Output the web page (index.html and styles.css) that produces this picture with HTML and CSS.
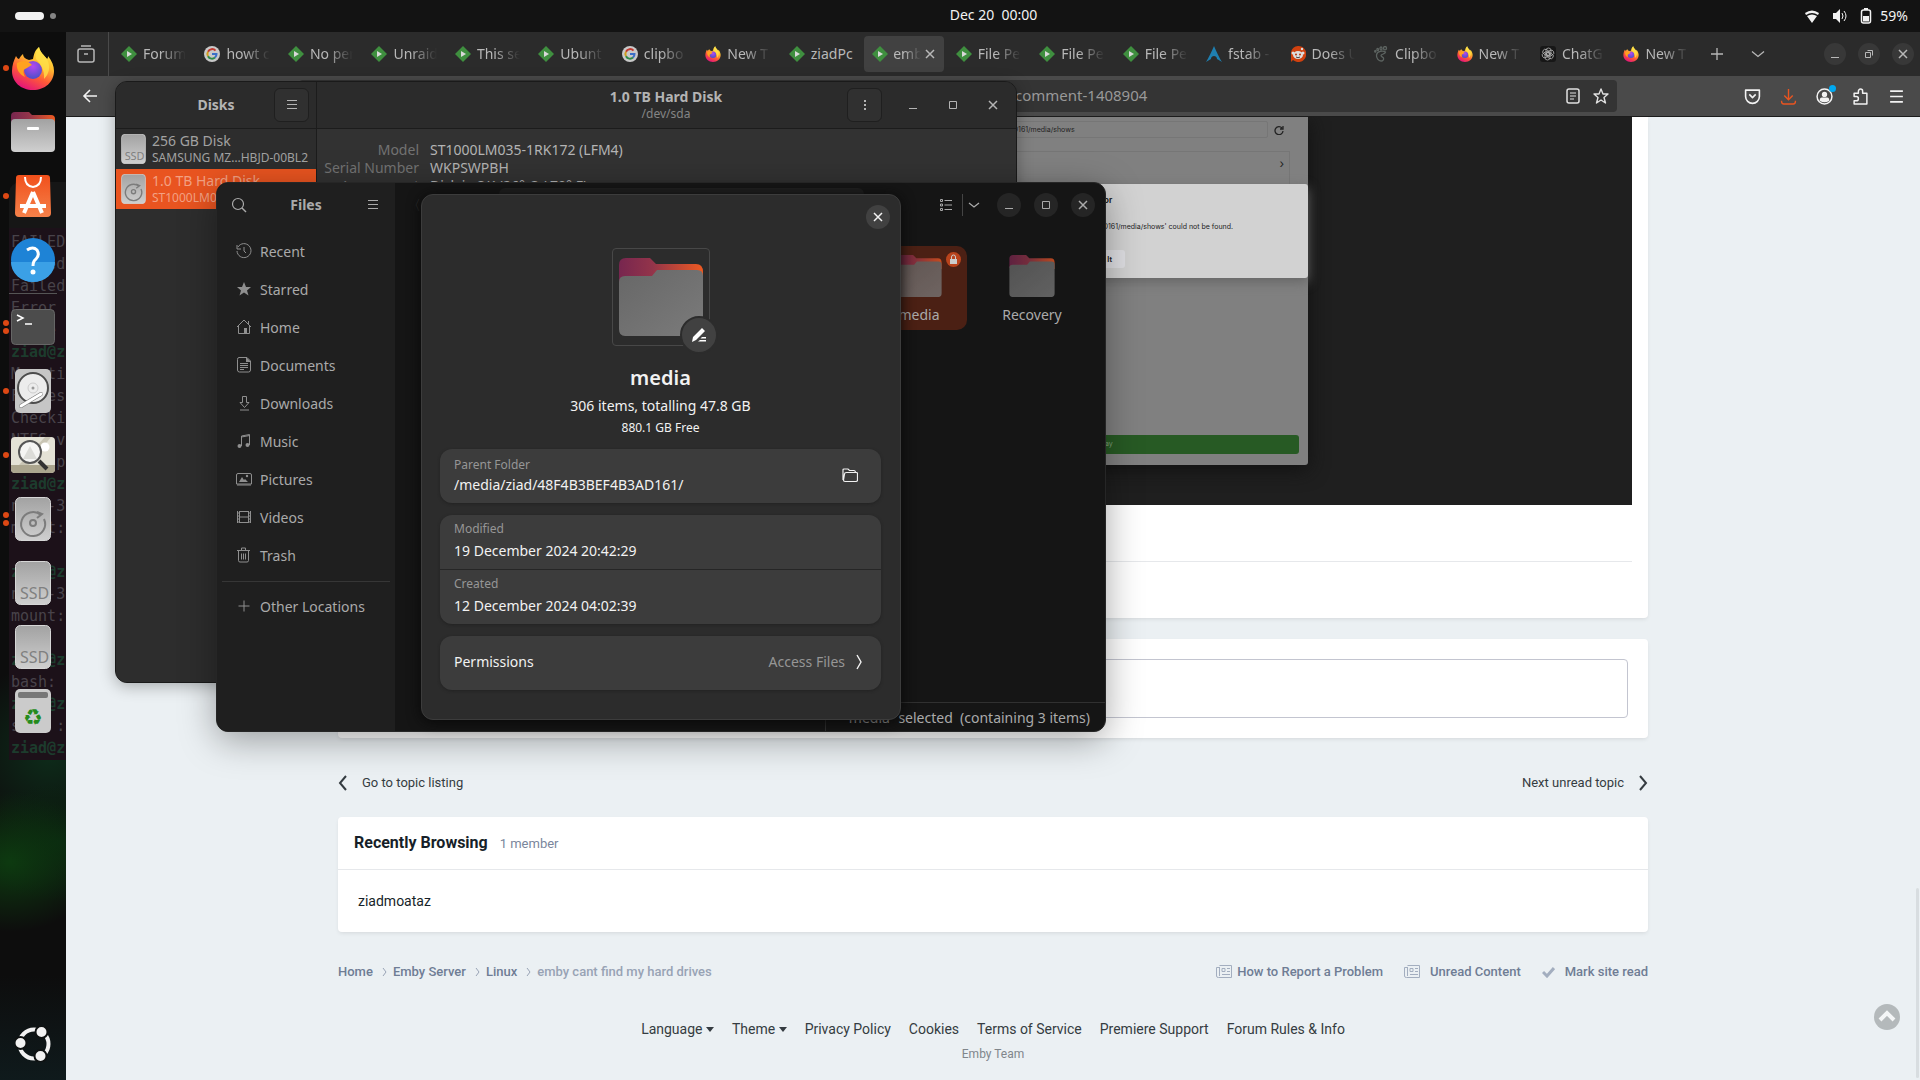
FILE: index.html
```html
<!DOCTYPE html>
<html lang="en">
<head>
  <meta charset="UTF-8" />
  <meta name="viewport" content="width=device-width, initial-scale=1.0" />
  <title>Desktop</title>
  <link rel="stylesheet" href="styles.css">
</head>
<body>
  <!-- shared icons -->
  <svg class="sprite" width="0" height="0" aria-hidden="true">
    <defs>
      <linearGradient id="g-flame" x1="0.8" y1="0" x2="0.3" y2="1">
        <stop offset="0" stop-color="#fff44f"/><stop offset="0.35" stop-color="#ffbd2f"/>
        <stop offset="0.65" stop-color="#ff5b36"/><stop offset="1" stop-color="#e3107e"/>
      </linearGradient>
      <radialGradient id="g-globe" cx="0.5" cy="0.3" r="0.7">
        <stop offset="0" stop-color="#b547f0"/><stop offset="1" stop-color="#4a50c8"/>
      </radialGradient>
      <linearGradient id="g-folder" x1="0" y1="0.3" x2="1" y2="0.3">
        <stop offset="0" stop-color="#77264f"/><stop offset="0.4" stop-color="#93344a"/><stop offset="1" stop-color="#ee5a22"/>
      </linearGradient>
      <linearGradient id="g-front" x1="0" y1="0" x2="1" y2="1">
        <stop offset="0" stop-color="#676767"/><stop offset="1" stop-color="#7b7b7b"/>
      </linearGradient>
      <linearGradient id="g-metal" x1="0" y1="0" x2="0" y2="1">
        <stop offset="0" stop-color="#a2a2a2"/><stop offset="1" stop-color="#cfcfcf"/>
      </linearGradient>
      <linearGradient id="g-bag" x1="0" y1="0" x2="0" y2="1">
        <stop offset="0" stop-color="#f1501b"/><stop offset="1" stop-color="#f5814a"/>
      </linearGradient>
    </defs>
    <symbol id="i-firefox" viewBox="0 0 44 44">
      <path fill="url(#g-flame)" d="M5 10c1 2 2 3 3 3 1-2 2-3 4-5 0 3 2 5 6 6l4-1c1-5 2-9 6-12 1 5 5 8 8 12 1-1 1-2 1-3 4 5 6 10 6 15 0 11-9 19-21 19S1 36 1 25c0-6 2-11 4-15z"/>
      <circle cx="22" cy="24" r="9" fill="url(#g-globe)"/>
      <path fill="#ffa21f" d="M6 17c5-3 11-3 15 2-3 1-4 3-7 4-2 1-2 4 0 8-6-3-9-8-8-14z"/>
      <path fill="#ffe14a" opacity=".8" d="M28 1c1 5 5 8 8 12 4 8 2 15-3 20 1-9-4-16-8-20-1-5 1-9 3-12z"/>
    </symbol>
    <symbol id="i-emby" viewBox="0 0 16 16">
      <path fill="#3f8f3f" d="M8 0l8 8-8 8-8-8z"/><path fill="#d9d9d9" d="M6 5l5 3-5 3z"/>
    </symbol>
    <symbol id="i-google" viewBox="0 0 16 16">
      <circle cx="8" cy="8" r="8" fill="#c9c9c9"/>
      <g fill="none" stroke-width="2"><path stroke="#c13a30" d="M4 5.7a4.5 4.5 0 0 1 7.5-1"/><path stroke="#d09c1c" d="M4 10.3a4.5 4.5 0 0 1 0-4.6"/><path stroke="#2f8a48" d="M11 11.5a4.5 4.5 0 0 1-7-1.2"/><path stroke="#3a6fc8" d="M8 8h4.5a4.5 4.5 0 0 1-1.5 3.5"/></g>
    </symbol>
    <symbol id="i-arch" viewBox="0 0 16 16"><path fill="#1f7fb0" d="M8 0c3 7 5 11 8 16-3-2-5-3-5-3s0-3-3-3-3 3-3 3-2 1-5 3C3 11 5 7 8 0z"/></symbol>
    <symbol id="i-reddit" viewBox="0 0 16 16">
      <path fill="#d0410f" d="M8 0a8 8 0 1 1-5 14l-2 2V6a8 8 0 0 1 7-6z"/><ellipse cx="8" cy="9" rx="5" ry="4" fill="#ddd"/>
      <circle cx="3" cy="7" r="1.5" fill="#ddd"/><circle cx="13" cy="7" r="1.5" fill="#ddd"/><circle cx="12" cy="3" r="1.2" fill="#ddd"/>
      <circle cx="6" cy="8.5" r="1" fill="#b8350c"/><circle cx="10" cy="8.5" r="1" fill="#b8350c"/><path d="M6 11q2 1.5 4 0" stroke="#444" fill="none"/>
    </symbol>
    <symbol id="i-gnome" viewBox="0 0 16 16"><g fill="none" stroke="#5d6461" stroke-width="1.3"><path d="M12.5 6C10 4.5 4 5 3.500 9c-.3 3 2 6 4.500 6 2 0 3-1.500 2.500-3-.6-1.500-2.500-1-2.500-2.500S12 8.500 12.500 6z"/><ellipse cx="12" cy="2.2" rx="1.5" ry="1.7"/><ellipse cx="8" cy="2.5" rx="1" ry="1.5"/><ellipse cx="4.7" cy="3.5" rx=".8" ry="1.2"/><ellipse cx="2.3" cy="5.3" rx=".6" ry=".9"/></g></symbol>
    <symbol id="i-chatgpt" viewBox="0 0 16 16"><rect width="16" height="16" rx="3" fill="#171717"/><g fill="none" stroke="#b0b0b0" stroke-width=".8"><rect x="6" y="2" width="5" height="7.5" rx="2.5"/><rect x="6" y="2" width="5" height="7.5" rx="2.5" transform="rotate(60 8 8)"/><rect x="6" y="2" width="5" height="7.5" rx="2.5" transform="rotate(120 8 8)"/><rect x="6" y="2" width="5" height="7.5" rx="2.5" transform="rotate(180 8 8)"/><rect x="6" y="2" width="5" height="7.5" rx="2.5" transform="rotate(240 8 8)"/><rect x="6" y="2" width="5" height="7.5" rx="2.5" transform="rotate(300 8 8)"/></g></symbol>
    <symbol id="i-close" viewBox="0 0 16 16"><path d="M4 4l8 8M12 4l-8 8" fill="none" stroke="currentColor" stroke-width="1.5"/></symbol>
    <symbol id="i-min" viewBox="0 0 16 16"><path d="M4 11.5h8" stroke="currentColor"/></symbol>
    <symbol id="i-max" viewBox="0 0 16 16"><path d="M4.5 4.5h7v7h-7z" fill="none" stroke="currentColor"/></symbol>
    <symbol id="i-menu" viewBox="0 0 16 16"><path d="M3 3.5h10M3 7.5h10M3 11.5h10" stroke="currentColor"/></symbol>
    <symbol id="i-down" viewBox="0 0 16 16"><path d="M2 5.5l6 5 6-5" fill="none" stroke="currentColor" stroke-width="1.3"/></symbol>
    <symbol id="i-folder" viewBox="0 0 84 78">
      <path fill="url(#g-folder)" d="M0 24V7q0-7 7-7h24l6 6h40q7 0 7 8v12z"/>
      <path fill="url(#g-front)" d="M0 24q0-6 6-6h27l5-6h40q6 0 6 6v53q0 7-6 7H6q-6 0-6-7z"/>
    </symbol>
    <symbol id="i-hdd" viewBox="0 0 36 44">
      <rect x="0.5" y="0.5" width="35" height="43" rx="5" fill="url(#g-metal)" stroke="#d6d6d6"/>
      <g fill="none" stroke="#7c7c7c" stroke-width="2"><path d="M26 18a12 12 0 1 0 3 4M22 21l5-4-5-2"/><circle cx="18" cy="26" r="3"/></g>
    </symbol>
    <symbol id="i-ssd" viewBox="0 0 36 44">
      <rect x="0.5" y="0.5" width="35" height="43" rx="5" fill="url(#g-metal)" stroke="#d6d6d6"/>
      <text x="5" y="38" font-family="Noto Sans, sans-serif" font-size="16" fill="#808080">SSD</text>
    </symbol>
    <symbol id="i-news" viewBox="0 0 16 14"><path fill="none" stroke="currentColor" d="M3.5.5h12v12h-13q-2 0-2-1.500V2.500h3M3.500 2v9M6 3.500h3v3H6zM11 3.500h3M11 6.500h3M6 9.500h8"/></symbol>
  </svg>

  <header class="topbar">
    <div class="workspaces"><span class="pill"></span><span class="dot"></span></div>
    <div class="clock">Dec 20&nbsp; 00:00</div>
    <div class="status">
      <svg width="16" height="16" viewBox="0 0 16 16"><path fill="#f2f2f2" d="M1 5q7-5 14 0l-1 2q-6-4-12 0zM3 8q5-3 10 0l-5 7z"/></svg>
      <svg width="16" height="16" viewBox="0 0 16 16"><path fill="#f2f2f2" d="M1 5h3l4-4v14l-4-4H1z"/><path d="M10 5q2 3 0 6M12 3q4 5 0 10" fill="none" stroke="#f2f2f2"/></svg>
      <svg width="12" height="16" viewBox="0 0 12 16"><rect x="1.5" y="2" width="9" height="13" rx="2" fill="none" stroke="#f2f2f2" stroke-width="1.5"/><path fill="#f2f2f2" d="M4 0h4v2H4zM3 8h6v5.500H3z"/></svg>
      <span>59%</span>
    </div>
  </header>

  <div class="desktop">
    <nav class="dock" aria-label="Dock">
      <div class="terminal" aria-hidden="true">
        <div class="terminal-head"></div>
<pre>FAILED
Failed
Failed
Error
mntme
<b>ziad@z</b>
Mounti
Failes
Checki
NTFS v
NTFS p
<b>ziad@z</b>
ntfs-3
mount:

<b>ziad@z</b>
ntfs-3
mount:

<b>ziad@z</b>
bash:
<b>ziad@z</b>
sudo :
<b>ziad@z</b></pre>
      </div>
      <button class="app" aria-label="Firefox"><span class="run"><i></i></span><svg width="44" height="44"><use href="#i-firefox"/></svg></button>
      <button class="app" aria-label="Files">
        <svg width="44" height="42" viewBox="0 0 44 42"><path fill="url(#g-folder)" d="M0 14V5q0-4 4-4h14l3 3h19q4 0 4 4v6z"/><rect y="8" width="44" height="33" rx="4" fill="url(#g-metal)"/><rect x="16" y="16" width="12" height="3" rx="1" fill="#fff"/></svg>
      </button>
      <button class="app" aria-label="App Center"><span class="run"><i></i></span>
        <svg width="36" height="42" viewBox="0 0 36 42"><path fill="url(#g-bag)" d="M4 0h28q3 0 3 3l1 35q0 4-4 4H4q-4 0-4-4L1 3q0-3 3-3z"/><path d="M10 2q0 9 8 10 8-1 8-10" fill="none" stroke="#fff" stroke-width="2"/><path d="M18 17L9 38M18 17l9 21M5 31h26" fill="none" stroke="#fff" stroke-width="4"/></svg>
      </button>
      <button class="app" aria-label="Help">
        <svg width="44" height="44" viewBox="0 0 44 44"><circle cx="22" cy="22" r="22" fill="#1e83d6"/><path fill="#3ba0e6" d="M0 24h44a22 20 0 0 1-44 0z"/><path d="M16 12q6-4 10 0 3 5-1 9-3 2-3 7" fill="none" stroke="#fff" stroke-width="3"/><circle cx="22" cy="34" r="2.5" fill="#fff"/></svg>
      </button>
      <span class="dock-line"></span>
      <button class="app" aria-label="Terminal"><span class="run"><i></i><i></i></span>
        <svg width="44" height="36" viewBox="0 0 44 36"><rect x="0.5" y="0.5" width="43" height="35" rx="4" fill="#4c4c4c" stroke="#666"/><path d="M6 6l6 3-6 3M14 15h7" fill="none" stroke="#fff" stroke-width="1.5"/></svg>
      </button>
      <button class="app" aria-label="Disks"><span class="run"><i></i></span>
        <svg width="36" height="44" viewBox="0 0 36 44"><rect width="36" height="44" rx="5" fill="#c6c6c6"/><circle cx="18" cy="19" r="15" fill="#ececec" stroke="#4c4c4c" stroke-width="2"/><circle cx="18" cy="19" r="5" fill="none" stroke="#ccc"/><circle cx="18" cy="19" r="1.5" fill="#999"/><path d="M6 37l20-12" stroke="#777" stroke-width="4" stroke-linecap="round"/><path d="M6 37l20-12" stroke="#fff" stroke-width="3" stroke-linecap="round"/></svg>
      </button>
      <button class="app" aria-label="Image Viewer"><span class="run"><i></i></span>
        <svg width="44" height="36" viewBox="0 0 44 36"><rect width="44" height="36" rx="4" fill="#e4e2d6"/><path fill="#c9c5b4" d="M34 0h6L18 28H8z"/><path fill="#aba58e" d="M0 28h44v4q0 4-4 4H4q-4 0-4-4z"/><circle cx="34" cy="10" r="4.5" fill="#fff"/><circle cx="19" cy="15" r="11" fill="#f5f5f3" stroke="#555" stroke-width="2"/><path fill="#dcdcd8" d="M12 22l7-13 7 13z"/><path d="M28 24l8 8" stroke="#333" stroke-width="4"/></svg>
      </button>
      <button class="app" aria-label="1.0 TB Disk"><span class="run"><i></i><i></i></span><svg width="36" height="44"><use href="#i-hdd"/></svg></button>
      <button class="app" aria-label="Volume 1"><svg width="36" height="44"><use href="#i-ssd"/></svg></button>
      <button class="app" aria-label="Volume 2"><svg width="36" height="44"><use href="#i-ssd"/></svg></button>
      <button class="app" aria-label="Trash">
        <svg width="36" height="44" viewBox="0 0 36 44"><rect width="36" height="44" rx="5" fill="#cbcbcb"/><rect x="3" y="3" width="30" height="6" rx="2" fill="#777"/><text x="18" y="36" text-anchor="middle" font-family="DejaVu Sans, sans-serif" font-size="22" fill="#258b1c">♻</text></svg>
      </button>
      <button class="app show-apps" aria-label="Show Apps">
        <svg width="36" height="36" viewBox="0 0 36 36"><circle cx="19" cy="18" r="14.5" fill="none" stroke="#f2f2f2" stroke-width="4"/><g fill="#f2f2f2" stroke="#0f1212" stroke-width="2"><circle cx="5.5" cy="17" r="6"/><circle cx="26.5" cy="6" r="6"/><circle cx="25.5" cy="30" r="6"/></g></svg>
      </button>
    </nav>

    <main class="browser">
      <div class="tabbar">
        <button class="tab-view" aria-label="Recent browsing"><svg width="18" height="18" viewBox="0 0 18 18" fill="none" stroke="currentColor" stroke-width="1.5"><path d="M4 1h10M3 4h12q2 0 2 2v9q0 2-2 2H3q-2 0-2-2V6q0-2 2-2zM7 9h4"/></svg></button>
        <div class="tabs">
          <button class="tab"><svg><use href="#i-emby"/></svg><span>Forums</span></button>
          <button class="tab"><svg><use href="#i-google"/></svg><span>howt c</span></button>
          <button class="tab"><svg><use href="#i-emby"/></svg><span>No per</span></button>
          <button class="tab"><svg><use href="#i-emby"/></svg><span>Unraid</span></button>
          <button class="tab"><svg><use href="#i-emby"/></svg><span>This se</span></button>
          <button class="tab"><svg><use href="#i-emby"/></svg><span>Ubunt</span></button>
          <button class="tab"><svg><use href="#i-google"/></svg><span>clipbo</span></button>
          <button class="tab"><svg><use href="#i-firefox"/></svg><span>New T</span></button>
          <button class="tab full"><svg><use href="#i-emby"/></svg><span>ziadPc</span></button>
          <button class="tab active"><svg><use href="#i-emby"/></svg><span>emb</span><svg class="x"><use href="#i-close"/></svg></button>
          <button class="tab"><svg><use href="#i-emby"/></svg><span>File Pe</span></button>
          <button class="tab"><svg><use href="#i-emby"/></svg><span>File Pe</span></button>
          <button class="tab"><svg><use href="#i-emby"/></svg><span>File Pe</span></button>
          <button class="tab"><svg><use href="#i-arch"/></svg><span>fstab -</span></button>
          <button class="tab"><svg><use href="#i-reddit"/></svg><span>Does U</span></button>
          <button class="tab"><svg><use href="#i-gnome"/></svg><span>Clipbo</span></button>
          <button class="tab"><svg><use href="#i-firefox"/></svg><span>New T</span></button>
          <button class="tab"><svg><use href="#i-chatgpt"/></svg><span>ChatG</span></button>
          <button class="tab"><svg><use href="#i-firefox"/></svg><span>New T</span></button>
        </div>
        <button class="tool" aria-label="New tab"><svg width="14" height="14" viewBox="0 0 14 14"><path d="M7 1v12M1 7h12" stroke="currentColor" stroke-width="1.3"/></svg></button>
        <button class="tool" aria-label="List all tabs"><svg width="16" height="16"><use href="#i-down"/></svg></button>
        <div class="win-controls">
          <button aria-label="Minimize"><svg><use href="#i-min"/></svg></button>
          <button aria-label="Restore"><svg viewBox="0 0 16 16"><path d="M4.5 6.5h5v5h-5zM6.5 4.5h5v5" fill="none" stroke="currentColor"/></svg></button>
          <button aria-label="Close"><svg><use href="#i-close"/></svg></button>
        </div>
      </div>
      <div class="navbar">
        <button class="back" aria-label="Back"><svg width="16" height="16" viewBox="0 0 16 16"><path d="M15 8H2M8 2L2 8l6 6" fill="none" stroke="currentColor" stroke-width="1.6"/></svg></button>
        <div class="urlbar">
          <input type="text" aria-label="Address" value="comment-1408904">
          <svg width="16" height="16" viewBox="0 0 16 16"><rect x="2" y="1" width="12" height="14" rx="2" fill="none" stroke="currentColor" stroke-width="1.5"/><path d="M5 5h6M5 8h6M5 11h4" stroke="currentColor"/></svg>
          <svg width="18" height="18" viewBox="0 0 18 18"><path d="M9 2l2 5h5l-4 3.500 1.500 5.500L9 13l-4.500 3L6 10.500 2 7h5z" fill="none" stroke="currentColor" stroke-width="1.4" stroke-linejoin="round"/></svg>
        </div>
        <div class="nav-tools">
          <button aria-label="Pocket"><svg viewBox="0 0 16 16"><path d="M1.5 2h13v6a6.500 6.500 0 0 1-13 0zM5 6l3 3 3-3" fill="none" stroke="currentColor" stroke-width="1.5" stroke-linejoin="round"/></svg></button>
          <button class="orange" aria-label="Downloads"><svg viewBox="0 0 16 16"><path d="M8 1v10M4 7l4 4 4-4M1.500 12v1q0 2 2 2h9q2 0 2-2v-1" fill="none" stroke="currentColor" stroke-width="1.3"/></svg></button>
          <button class="account" aria-label="Account"><svg viewBox="0 0 16 16"><circle cx="8" cy="8" r="7" fill="none" stroke="currentColor" stroke-width="1.4"/><circle cx="8" cy="6" r="2.5" fill="currentColor"/><path d="M3.5 12q0-3 2-3h5q2 0 2 3-4.500 3-9 0z" fill="currentColor"/></svg><i class="badge"></i></button>
          <button aria-label="Extensions"><svg viewBox="0 0 16 16"><path d="M2 5h4V3a2 2 0 0 1 4 0v2h4v10H2v-3h2a2 2 0 0 0 0-4H2z" fill="none" stroke="currentColor" stroke-width="1.4" stroke-linejoin="round"/></svg></button>
          <button aria-label="Menu"><svg viewBox="0 0 16 16"><path d="M2 3h12M2 8h12M2 13h12" stroke="currentColor" stroke-width="1.6"/></svg></button>
        </div>
      </div>

      <div class="page">
        <div class="content">
          <article class="card post">
            <div class="shot">
              <div class="shot-app">
                <div class="shot-path"><span>D161/media/shows</span><svg width="10" height="10" viewBox="0 0 10 10"><path d="M8 3a4 4 0 1 0 1 3M9 1v3H6" fill="none" stroke="#222" stroke-width="1.3"/></svg></div>
                <div class="shot-row">›</div>
                <div class="shot-modal">
                  <b>or</b>
                  <p>3AD161/media/shows' could not be found.</p>
                  <span class="shot-ok">Got It</span>
                </div>
                <div class="shot-play">ay</div>
              </div>
            </div>
            <hr>
          </article>
          <div class="card reply"><textarea aria-label="Reply to this topic"></textarea></div>
          <div class="pager">
            <a href="#"><svg width="10" height="16" viewBox="0 0 10 16"><path d="M8 1L2 8l6 7" fill="none" stroke="currentColor" stroke-width="2"/></svg>Go to topic listing</a>
            <a href="#">Next unread topic<svg width="10" height="16" viewBox="0 0 10 16"><path d="M2 1l6 7-6 7" fill="none" stroke="currentColor" stroke-width="2"/></svg></a>
          </div>
          <section class="card browsing">
            <h2>Recently Browsing <small>1 member</small></h2>
            <p>ziadmoataz</p>
          </section>
          <div class="crumbs">
            <a href="#">Home</a><svg width="5" height="8" viewBox="0 0 5 8"><path d="M1 0l3 4-3 4"/></svg><a href="#">Emby Server</a><svg width="5" height="8" viewBox="0 0 5 8"><path d="M1 0l3 4-3 4"/></svg><a href="#">Linux</a><svg width="5" height="8" viewBox="0 0 5 8"><path d="M1 0l3 4-3 4"/></svg><span>emby cant find my hard drives</span>
            <div class="crumb-tools">
              <a href="#"><svg width="16" height="14"><use href="#i-news"/></svg>How to Report a Problem</a>
              <a href="#" class="wide"><svg width="16" height="14"><use href="#i-news"/></svg>Unread Content</a>
              <a href="#" class="wide"><svg width="13" height="12" viewBox="0 0 13 12"><path d="M1 6l4 4 7-8" fill="none" stroke="currentColor" stroke-width="3"/></svg>Mark site read</a>
            </div>
          </div>
          <footer class="footer">
            <a href="#">Language <i class="caret"></i></a>
            <a href="#">Theme <i class="caret"></i></a>
            <a href="#">Privacy Policy</a>
            <a href="#">Cookies</a>
            <a href="#">Terms of Service</a>
            <a href="#">Premiere Support</a>
            <a href="#">Forum Rules &amp; Info</a>
          </footer>
          <p class="team">Emby Team</p>
        </div>
        <button class="to-top" aria-label="Back to top"><svg width="26" height="26" viewBox="0 0 26 26"><circle cx="13" cy="13" r="13" fill="#b4b9bb"/><path d="M6 16l7-7 7 7" fill="none" stroke="#f4f6f7" stroke-width="4"/></svg></button>
        <span class="scrollbar"></span>
      </div>
    </main>
  </div>

  <section class="window disks">
    <aside class="disks-side">
      <div class="disks-head"><h2>Disks</h2><button class="boxed" aria-label="Menu"><svg><use href="#i-menu"/></svg></button></div>
      <button class="disk"><svg width="25" height="30"><use href="#i-ssd"/></svg><span>256 GB Disk<small>SAMSUNG MZ…HBJD-00BL2</small></span></button>
      <button class="disk selected"><svg width="25" height="30"><use href="#i-hdd"/></svg><span>1.0 TB Hard Disk<small>ST1000LM035-1RK172</small></span></button>
    </aside>
    <div class="disks-main">
      <div class="disks-head">
        <h2>1.0 TB Hard Disk<small>/dev/sda</small></h2>
        <button class="boxed" aria-label="Drive options"><svg viewBox="0 0 16 16"><path d="M7 3h2v2H7zM7 7h2v2H7zM7 11h2v2H7z" fill="currentColor"/></svg></button>
        <div class="disks-controls">
          <button aria-label="Minimize"><svg><use href="#i-min"/></svg></button>
          <button aria-label="Maximize"><svg><use href="#i-max"/></svg></button>
          <button aria-label="Close"><svg><use href="#i-close"/></svg></button>
        </div>
      </div>
      <dl>
        <dt>Model</dt><dd>ST1000LM035-1RK172 (LFM4)</dd>
        <dt>Serial Number</dt><dd>WKPSWPBH</dd>
        <dt>Assessment</dt><dd>Disk is OK (26° C / 79° F)</dd>
      </dl>
    </div>
  </section>

  <section class="window files">
    <aside class="files-side">
      <div class="files-head">
        <button aria-label="Search"><svg viewBox="0 0 16 16"><circle cx="7" cy="7" r="5.5" fill="none" stroke="currentColor" stroke-width="1.2"/><path d="M11 11l4 4" stroke="currentColor" stroke-width="1.5"/></svg></button>
        <h2>Files</h2>
        <button aria-label="Menu"><svg><use href="#i-menu"/></svg></button>
      </div>
      <nav class="places">
        <a href="#"><svg viewBox="0 0 16 16"><path d="M2 4a7 7 0 1 1-1 4M1 2v4h4M8 4v4l2 2"/></svg>Recent</a>
        <a href="#"><svg viewBox="0 0 16 16"><path class="solid" d="M8 1l2 5h5l-4 3.500 1.500 5L8 11.500l-4.500 3L5 9.500 1 6h5z"/></svg>Starred</a>
        <a href="#"><svg viewBox="0 0 16 16"><path d="M1 8l7-7 7 7M2.500 7v7.500h11V7M12.500 2v3"/><path class="solid" d="M8 9h3v6H8z"/></svg>Home</a>
        <a href="#"><svg viewBox="0 0 16 16"><path d="M3 .5h8l3.500 3.500v9q0 2-2 2h-9q-2 0-2-2V2.500q0-2 1.500-2zM4 6.500h8M4 8.500h8M4 10.500h8M4 12.500h4"/><path class="solid" d="M10 0v5h5z"/></svg>Documents</a>
        <a href="#"><svg viewBox="0 0 16 16"><path d="M6.5 1.500h4v6h2.500L8.500 12.500 4 7.500h2.500zM4 15h9"/></svg>Downloads</a>
        <a href="#"><svg viewBox="0 0 16 16"><path d="M5.5 13V3l8-1.500V12M5.500 4l8-1.500"/><circle class="solid" cx="3.5" cy="13" r="2"/><circle class="solid" cx="11.5" cy="12" r="2"/></svg>Music</a>
        <a href="#"><svg viewBox="0 0 16 16"><path d="M2 2.500h12q1.500 0 1.500 1.500v9H.5V4q0-1.500 1.500-1.500zM1 14h14"/><path class="solid" d="M3 11l3-5 2 3 1-1 3 3z"/><circle class="solid" cx="11" cy="5" r="1.2"/></svg>Pictures</a>
        <a href="#"><svg viewBox="0 0 16 16"><path d="M1.5 2v12M14.500 2v12M4 2.500h8M4 8h8M4 13.500h8M3.500 2v12M12.500 2v12M1 4h2M1 7h2M1 10h2M1 13h2M13 4h2M13 7h2M13 10h2M13 13h2"/></svg>Videos</a>
        <a href="#"><svg viewBox="0 0 16 16"><path d="M1 3.500h13M5.500 3V1h4v2M2.500 4v9.500q0 1.500 1.500 1.500h7q1.500 0 1.500-1.500V4M5.500 6.500v6M7.500 6.500v6M9.500 6.500v6"/></svg>Trash</a>
        <hr>
        <a href="#"><svg viewBox="0 0 16 16"><path d="M8 2.500v11M2.500 8h11"/></svg>Other Locations</a>
      </nav>
    </aside>
    <div class="files-main">
      <div class="files-tools">
        <span class="prev">〈</span>
        <span class="pathbar"></span>
        <button aria-label="List view"><svg viewBox="0 0 16 16"><path d="M2.5 2.500h2v2h-2zM2.500 7h2v2h-2zM2.500 11.500h2v2h-2zM6.500 3.500H14M6.500 8H14M6.500 12.500H14" fill="none" stroke="currentColor"/></svg></button>
        <span class="sep"></span>
        <button aria-label="View options"><svg viewBox="0 0 16 16"><path d="M3 6l5 4 5-4" fill="none" stroke="currentColor" stroke-width="1.3"/></svg></button>
        <div class="files-controls">
          <button aria-label="Minimize"><svg><use href="#i-min"/></svg></button>
          <button aria-label="Maximize"><svg><use href="#i-max"/></svg></button>
          <button aria-label="Close"><svg><use href="#i-close"/></svg></button>
        </div>
      </div>
      <div class="files-grid">
        <div class="file selected"><svg width="46" height="42"><use href="#i-folder"/></svg>media
          <i class="lock"><svg width="15" height="15" viewBox="0 0 15 15"><circle cx="7.5" cy="7.5" r="7.5" fill="#b9431c"/><path d="M4 7h7v5H4z" fill="#ccc"/><path d="M5.5 7V5a2 2 0 0 1 4 0v2" fill="none" stroke="#ccc"/></svg></i>
        </div>
        <div class="file"><svg width="46" height="42"><use href="#i-folder"/></svg>Recovery</div>
      </div>
      <div class="files-status">“media” selected&nbsp; (containing 3 items)</div>
    </div>
  </section>

  <div class="dialog" role="dialog" aria-label="Properties">
    <button class="dialog-close" aria-label="Close"><svg><use href="#i-close"/></svg></button>
    <div class="preview">
      <svg width="84" height="78"><use href="#i-folder"/></svg>
      <button class="edit" aria-label="Edit icon"><svg width="16" height="16" viewBox="0 0 16 16"><path fill="#fff" d="M1 15l1-5 9-9 3 3-9 9zM9 13h6v1.500H7zM11 10h4v1.500H9.500z"/></svg></button>
    </div>
    <h1>media</h1>
    <p class="summary">306 items, totalling 47.8 GB</p>
    <p class="free">880.1 GB Free</p>
    <div class="group">
      <div class="row tight"><div><small>Parent Folder</small>/media/ziad/48F4B3BEF4B3AD161/</div>
        <button aria-label="Open parent folder"><svg width="16" height="16" viewBox="0 0 16 16"><path d="M1 13V3q0-1 1-1h4l1.500 1.500H12q1 0 1.500 1.500M4.500 5.500h10q1 0 1 1V13q0 1.500-1.500 1.500H3q-1.500 0-1.500-1.500l1-6q0-1.500 2-1.500z" fill="none" stroke="currentColor" stroke-width="1.2"/></svg></button>
      </div>
    </div>
    <div class="group">
      <div class="row"><div><small>Modified</small>19 December 2024 20:42:29</div></div>
      <div class="row"><div><small>Created</small>12 December 2024 04:02:39</div></div>
    </div>
    <div class="group">
      <button class="row">Permissions<span>Access Files</span><svg width="8" height="16" viewBox="0 0 8 16"><path d="M2 1l4 7-4 7" fill="none" stroke="currentColor" stroke-width="1.4"/></svg></button>
    </div>
  </div>
</body>
</html>
```
FILE: styles.css
```css
* {
  box-sizing: border-box;
}

body {
  margin: 0;
  height: 100vh;
  display: flex;
  flex-direction: column;
  overflow: hidden;
  background-color: #0e0e0e;
  color: #f2f2f2;
  font-family: "Noto Sans", "Open Sans", sans-serif;
  font-size: 14px;
}

button {
  background: none;
  border: none;
  padding: 0;
  margin: 0;
  color: inherit;
  font: inherit;
  text-align: left;
}

a {
  color: inherit;
  text-decoration: none;
}

h1, h2, p, dl, dd {
  margin: 0;
}

svg {
  display: block;
  flex: none;
}

.sprite {
  position: absolute;
}

/* top bar */
.topbar {
  flex: none;
  height: 32px;
  display: grid;
  grid-template-columns: 1fr auto 1fr;
  align-items: center;
  background-color: #131313;
  padding-right: 12px;
  padding-left: 15px;
}

.workspaces {
  display: flex;
  align-items: center;
  gap: 6px;
}

.pill {
  width: 29px;
  height: 8px;
  border-radius: 4px;
  background-color: #f2f2f2;
}

.dot {
  width: 6px;
  height: 6px;
  border-radius: 50%;
  background-color: #858585;
}

.clock {
  padding-left: 64px;
  line-height: 28px;
  padding-bottom: 2px;
}

.status {
  display: flex;
  justify-content: flex-end;
  align-items: center;
  gap: 12px;
  line-height: 28px;
}

.status span {
  margin-left: -4px;
}

/* dock */
.desktop {
  flex: 1;
  min-height: 0;
  display: flex;
}

.dock {
  position: relative;
  width: 66px;
  flex: none;
  display: flex;
  flex-direction: column;
  padding: 4px 0;
  background:
    radial-gradient(ellipse 90px 70px at 10px 830px, #0d3a10, transparent),
    radial-gradient(ellipse 90px 60px at 60px 810px, #0a2510, transparent),
    radial-gradient(ellipse 90px 90px at 50px 720px, #0d2c1a, transparent),
    linear-gradient(#0d0d0d 90%, #0f1a1c);
}

.terminal {
  position: absolute;
  left: 9px;
  top: 150px;
  right: 0;
  overflow: hidden;
  background-color: #1c1119;
  border-radius: 12px 0 0 0;
}

.terminal-head {
  height: 46px;
  background-color: #161616;
}

.terminal pre {
  margin: 0;
  padding: 3px 0 1px 2px;
  font-family: "DejaVu Sans Mono", monospace;
  font-size: 15px;
  line-height: 22px;
  color: #48434a;
}

.terminal b {
  color: #1c3c2d;
}

.app {
  position: relative;
  height: 64px;
  flex: none;
  display: flex;
  align-items: center;
  justify-content: center;
}

.run {
  position: absolute;
  left: 3px;
  display: flex;
  flex-direction: column;
  gap: 2px;
}

.run i {
  width: 6px;
  height: 6px;
  border-radius: 50%;
  background-color: #dd4814;
}

.dock-line {
  position: relative;
  flex: none;
  height: 1px;
  margin: 1px 9px;
  background-color: #555;
}

.show-apps {
  margin-top: auto;
}

/* browser */
.browser {
  flex: 1;
  min-width: 0;
  display: flex;
  flex-direction: column;
}

.tabbar {
  height: 44px;
  flex: none;
  display: flex;
  align-items: center;
  background-color: #2b2b2b;
  color: #b8b8b8;
  padding-right: 6px;
}

.tab-view {
  width: 43px;
  height: 44px;
  padding-left: 11px;
  border-right: 1px solid #4a4a4a;
}

.tabs {
  flex: 1;
  min-width: 0;
  display: flex;
  gap: 4px;
  padding: 0 1px 0 4px;
}

.tab {
  flex: 1;
  min-width: 0;
  height: 36px;
  display: flex;
  align-items: center;
  gap: 6px;
  padding: 0 6px 0 8px;
  border-radius: 4px;
}

.tab svg {
  width: 16px;
  height: 16px;
}

.tab span {
  flex: 1;
  min-width: 0;
  padding-bottom: 2px;
  overflow: hidden;
  white-space: nowrap;
  mask-image: linear-gradient(to right, #000 40%, transparent);
}

.tab.full span {
  mask-image: none;
}

.tab.active {
  background-color: #414141;
  gap: 5px;
}

.tab .x {
  margin-left: -4px;
}

.tool {
  width: 41px;
  display: flex;
  justify-content: center;
}

.win-controls {
  display: flex;
  gap: 12px;
  margin-left: 46px;
}

.win-controls button,
.files-controls button {
  width: 22px;
  height: 22px;
  border-radius: 50%;
  background-color: #383838;
  display: flex;
  align-items: center;
  justify-content: center;
}

.win-controls svg {
  width: 16px;
  height: 16px;
}

.navbar {
  height: 41px;
  flex: none;
  display: flex;
  align-items: center;
  padding: 0 14px 0 16px;
  background-color: #4a4a4a;
  border-bottom: 1px solid #1c1c1c;
}

.urlbar {
  flex: 1;
  height: 32px;
  margin-left: 201px;
  padding-right: 7px;
  display: flex;
  align-items: center;
  gap: 11px;
  background-color: #343434;
  border-radius: 4px;
  color: #e0e0e0;
}

.urlbar input {
  flex: 1;
  height: 32px;
  border: none;
  padding: 0 0 2px 716px;
  background: none;
  color: #999;
  font: inherit;
  font-size: 15px;
}

.nav-tools {
  display: flex;
  gap: 18px;
  margin-left: 127px;
}

.nav-tools button {
  position: relative;
  width: 18px;
}

.nav-tools svg {
  width: 17px;
  height: 17px;
}

.orange {
  color: #e95420;
}

.badge {
  position: absolute;
  right: -2px;
  top: -3px;
  width: 7px;
  height: 7px;
  border-radius: 50%;
  background-color: #00a8f0;
}

/* forum page */
.page {
  position: relative;
  flex: 1;
  min-height: 0;
  overflow: hidden;
  background-color: #ebf0f3;
  color: #353c41;
  font-family: Roboto, sans-serif;
  font-size: 13px;
}

.content {
  max-width: 1310px;
  margin: 0 auto;
}

.card {
  background-color: #fff;
  border-radius: 4px;
  box-shadow: 0 2px 4px -1px rgba(0, 0, 0, 0.1);
}

.post {
  padding: 0 16px 56px;
  border-radius: 0 0 4px 4px;
  margin-bottom: 21px;
}

.post hr {
  margin: 56px 0 0;
  border: none;
  border-top: 1px solid #e6e8eb;
}

.shot {
  height: 388px;
  display: flex;
  justify-content: center;
  align-items: flex-start;
  background-color: #1f1f1f;
  color: #222;
  font-family: Inter, sans-serif;
  font-size: 7px;
}

.shot-app {
  width: 630px;
  height: 348px;
  display: flex;
  flex-direction: column;
  background-color: #808080;
  border-radius: 0 0 3px 3px;
  box-shadow: 0 4px 20px #111;
}

.shot-path {
  display: flex;
  align-items: center;
  gap: 6px;
  margin: 4px 24px 13px;
}

.shot-path span {
  flex: 1;
  padding-left: 310px;
  line-height: 15px;
  border: 1px solid #767676;
  border-radius: 2px;
}

.shot-row {
  height: 33px;
  margin: 0 18px;
  padding: 4px 5px;
  border: 1px solid #767676;
  border-bottom: none;
  text-align: right;
  font-size: 12px;
  line-height: 15px;
}

.shot-modal {
  height: 94px;
  display: flex;
  flex-direction: column;
  padding: 12px 0 10px;
  background-color: #d2d2d2;
  border-radius: 3px;
  box-shadow: 0 4px 12px #666;
  line-height: 9px;
}

.shot-modal b {
  padding-left: 426px;
  font-size: 8px;
}

.shot-modal p {
  margin-top: 17px;
  padding-right: 75px;
  text-align: right;
}

.shot-ok {
  align-self: flex-end;
  margin-top: auto;
  margin-right: 183px;
  padding: 5px 13px 4px;
  background-color: #dfdfe3;
  border-radius: 3px;
  font-weight: bold;
}

.shot-play {
  margin: auto 9px 11px;
  height: 19px;
  padding-left: 418px;
  line-height: 18px;
  background-color: #275a24;
  border-radius: 3px;
  color: #7fa07d;
}

.reply {
  padding: 20px;
}

.reply textarea {
  display: block;
  width: 100%;
  height: 59px;
  border: 1px solid #c3c5d0;
  border-radius: 4px;
  background: none;
  resize: none;
}

.pager {
  display: flex;
  justify-content: space-between;
  padding: 35px 0 25px;
}

.pager a {
  display: flex;
  align-items: center;
  gap: 14px;
  line-height: 19px;
}

.browsing h2 {
  padding: 15px 16px;
  border-bottom: 1px solid #e6e8eb;
  color: #171f29;
  font-size: 16px;
  font-weight: bold;
  line-height: 21px;
}

.browsing small {
  margin-left: 8px;
  font-size: 13px;
  font-weight: normal;
  color: #7a869c;
}

.browsing p {
  padding: 21px 20px;
  color: #171f29;
  font-size: 14px;
  line-height: 20px;
}

.crumbs {
  display: flex;
  align-items: center;
  padding: 30px 0 37px;
  line-height: 20px;
  font-weight: 500;
  color: #6f7d95;
}

.crumbs > svg {
  margin: 0 6px 0 9px;
  fill: none;
  stroke: #98a3b5;
}

.crumbs > span {
  color: #98a3b5;
}

.crumb-tools {
  margin-left: auto;
  display: flex;
  gap: 21px;
}

.crumb-tools a {
  display: flex;
  align-items: center;
  gap: 5px;
}

.crumb-tools .wide {
  gap: 10px;
}

.crumb-tools svg {
  color: #a3aebf;
}

.footer {
  display: flex;
  justify-content: center;
  gap: 18px;
  font-size: 14px;
  line-height: 20px;
}

.caret {
  display: inline-block;
  border: 4px solid transparent;
  border-top: 5px solid #353c41;
  border-bottom: none;
  vertical-align: 2px;
}

.team {
  margin-top: 5px;
  text-align: center;
  font-size: 12px;
  line-height: 20px;
  color: #80868b;
}

.to-top {
  position: absolute;
  right: 20px;
  bottom: 50px;
}

.scrollbar {
  position: absolute;
  right: 1px;
  bottom: 2px;
  width: 3px;
  height: 190px;
  border-radius: 2px;
  background-color: #d8dde0;
}

/* windows */
.window {
  position: absolute;
  display: flex;
  overflow: hidden;
  border-radius: 12px;
}

.window h2 {
  font-size: 14px;
  line-height: 18px;
  text-align: center;
}

.window button svg {
  width: 16px;
  height: 16px;
}

.disks {
  left: 115px;
  top: 81px;
  width: 902px;
  height: 602px;
  border: 1px solid #1a1a1a;
  background-color: #323232;
  box-shadow: 0 3px 16px rgba(0, 0, 0, 0.3);
  color: #b4b4b4;
}

.disks-side {
  width: 201px;
  flex: none;
  background-color: #2d2d2d;
  border-right: 1px solid #1c1c1c;
}

.disks-main {
  flex: 1;
}

.disks-head {
  height: 47px;
  display: flex;
  align-items: center;
  background-color: #2b2b2b;
  border-bottom: 1px solid #1c1c1c;
}

.disks-side .disks-head {
  padding: 0 7px 0 42px;
}

.disks-main .disks-head {
  padding: 0 15px 0 168px;
}

.disks-head h2 {
  flex: 1;
}

.disks-head small {
  display: block;
  font-size: 12px;
  line-height: 16px;
  font-weight: normal;
  color: #858585;
}

.boxed {
  width: 35px;
  height: 34px;
  display: flex;
  align-items: center;
  justify-content: center;
  border: 1px solid #1f1f1f;
  border-radius: 6px;
  background-color: #303030;
}

.disks-controls {
  display: flex;
  gap: 24px;
  margin-left: 23px;
}

.disk {
  width: 100%;
  height: 40px;
  display: flex;
  align-items: center;
  gap: 6px;
  padding-left: 5px;
  line-height: 18px;
  color: #a2a2a2;
}

.window .disk svg {
  width: 25px;
  height: 30px;
}

.disk small {
  display: block;
  font-size: 12px;
  line-height: 16px;
  white-space: nowrap;
}

.disk.selected {
  background-color: #e95420;
  color: #f3a183;
}

.disks dl {
  display: grid;
  grid-template-columns: 102px 1fr;
  column-gap: 11px;
  padding-top: 12px;
  line-height: 18px;
  white-space: nowrap;
}

.disks dt {
  text-align: right;
  color: #737373;
}

.files {
  left: 216px;
  top: 182px;
  width: 890px;
  height: 550px;
  background-color: #151515;
  border: 1px solid #262626;
  box-shadow: 0 8px 36px rgba(0, 0, 0, 0.35);
  color: #aaa;
}

.files-side {
  width: 178px;
  flex: none;
  background-color: #1f1f1f;
}

.files-head {
  height: 44px;
  display: flex;
  align-items: center;
  padding: 0 14px;
}

.files-head h2 {
  flex: 1;
}

.places {
  padding-top: 5px;
}

.places a {
  height: 38px;
  display: flex;
  align-items: center;
  gap: 8px;
  padding-left: 19px;
}

.places svg {
  width: 16px;
  height: 16px;
  fill: none;
  stroke: #8f8f8f;
}

.places .solid {
  fill: #8f8f8f;
  stroke: none;
}

.places hr {
  margin: 7px 5px 5px;
  border: none;
  border-top: 1px solid #363636;
}

.files-main {
  flex: 1;
  display: flex;
  flex-direction: column;
}

.files-tools {
  height: 44px;
  display: flex;
  align-items: center;
  padding-right: 10px;
}

.prev {
  width: 104px;
  padding-left: 12px;
  color: #333;
}

.pathbar {
  width: 365px;
  height: 34px;
  margin-right: auto;
  border-radius: 6px;
  background-color: #1f1f1f;
}

.sep {
  width: 1px;
  height: 22px;
  margin: 0 3px 0 8px;
  background-color: #444;
}

.files-controls {
  display: flex;
  gap: 13px;
  margin-left: 15px;
}

.files-controls button {
  width: 24px;
  height: 24px;
  background-color: #252525;
}

.files-grid {
  flex: 1;
  display: flex;
  align-items: flex-start;
  justify-content: flex-end;
  gap: 17px;
  padding: 19px 25px 0 0;
}

.file {
  position: relative;
  width: 96px;
  height: 84px;
  display: flex;
  flex-direction: column;
  align-items: center;
  gap: 8px;
  padding-top: 9px;
  border-radius: 10px;
  line-height: 20px;
}

.file > svg {
  opacity: 0.75;
}

.file.selected {
  background-color: #4b2014;
}

.lock {
  position: absolute;
  right: 6px;
  top: 6px;
}

.files-status {
  align-self: flex-end;
  height: 29px;
  padding: 0 15px 0 18px;
  border-top: 1px solid #303030;
  border-left: 1px solid #303030;
  line-height: 30px;
}

/* properties dialog */
.dialog {
  position: absolute;
  left: 421px;
  top: 194px;
  width: 480px;
  height: 526px;
  display: flex;
  flex-direction: column;
  align-items: center;
  padding: 53px 19px 0 18px;
  background-color: #2c2c2c;
  border: 1px solid #3c3c3c;
  border-radius: 12px;
  box-shadow: 0 2px 14px #080808;
}

.dialog-close {
  position: absolute;
  right: 10px;
  top: 10px;
  width: 24px;
  height: 24px;
  padding: 4px;
  border-radius: 50%;
  background-color: #414141;
}

.dialog-close svg {
  width: 16px;
  height: 16px;
}

.preview {
  position: relative;
  width: 98px;
  height: 98px;
  padding: 9px 6px;
  border: 1px solid #484848;
  border-radius: 4px;
}

.edit {
  position: absolute;
  right: -9px;
  bottom: -9px;
  width: 38px;
  height: 38px;
  padding: 9px;
  border: 2px solid #2c2c2c;
  border-radius: 50%;
  background-color: #414141;
}

.dialog h1 {
  margin-top: 18px;
  font-size: 20px;
  font-weight: 600;
  line-height: 28px;
}

.summary {
  margin-top: 4px;
  line-height: 20px;
}

.free {
  margin-top: 3px;
  font-size: 12px;
  line-height: 18px;
}

.group {
  width: 100%;
  margin-top: 12px;
  border-radius: 12px;
  background-color: #3c3c3c;
  box-shadow: 0 1px 3px #222;
}

.row {
  width: 100%;
  height: 54px;
  display: flex;
  align-items: center;
  justify-content: space-between;
  padding: 0 18px 2px 14px;
  line-height: 24px;
}

.row.tight {
  padding: 0 23px 2px 14px;
  line-height: 20px;
}

.row + .row {
  height: 55px;
  border-top: 1px solid #262626;
}

.row small {
  display: block;
  font-size: 12px;
  line-height: 20px;
  color: #969696;
}

.row span {
  margin: 0 10px 0 auto;
  color: #969696;
}
```
